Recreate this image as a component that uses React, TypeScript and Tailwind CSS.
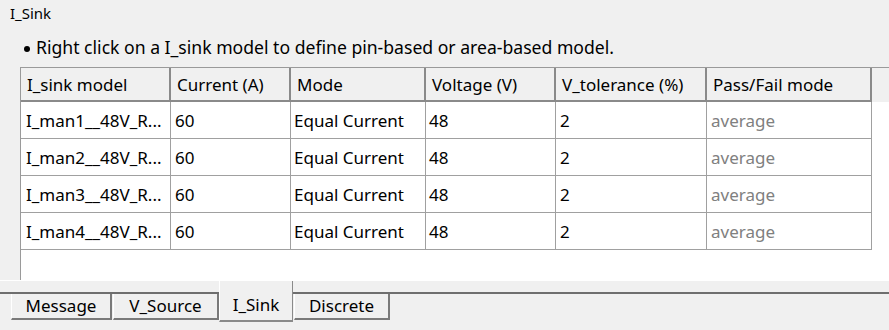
const columns = [
  { label: "I_sink model", w: "w-[150px]" },
  { label: "Current (A)", w: "w-[120px]" },
  { label: "Mode", w: "w-[135px]" },
  { label: "Voltage (V)", w: "w-[130px]" },
  { label: "V_tolerance (%)", w: "w-[151px]" },
  { label: "Pass/Fail mode", w: "w-[165px]" },
];

const rows = [1, 2, 3, 4].map((n) => ({
  model: `I_man${n}__48V_R...`,
  current: "60",
  mode: "Equal Current",
  voltage: "48",
  tolerance: "2",
  passFail: "average",
}));

const tabs = [
  { label: "Message", w: "w-[101px]" },
  { label: "V_Source", w: "w-[106px]" },
  { label: "I_Sink", w: "w-[74px]" },
  { label: "Discrete", w: "w-[96px]" },
];

export default function App() {
  return (
    <div className="w-[889px] h-[330px] overflow-hidden bg-[#f0f0f0] text-[#000] font-['Noto_Sans',sans-serif] flex flex-col">
      <div className="h-[29px] pl-[10px] pt-[3px] text-[15px] leading-[20px]">I_Sink</div>

      <div className="h-[38px] pl-[24px] pt-[6px] flex items-start text-[17.6px] leading-[24px]">
        <span className="w-[6px] h-[6px] rounded-full bg-black mt-[11px] mr-[6px] shrink-0" />
        <span className="whitespace-nowrap">Right click on a I_sink model to define pin-based or area-based model.</span>
      </div>

      <div className="ml-[20px] h-[213px] bg-white border-l border-t border-[#9a9a9a] flex flex-col">
        <div className="flex h-[34px] bg-[#f0f0f0] shrink-0">
          {columns.map((c) => (
            <div
              key={c.label}
              className={`${c.w} shrink-0 border-r-2 border-b-2 border-[#8a8a8a] pl-[6px] pt-[2px] text-[17px] leading-[30px] whitespace-nowrap`}
            >
              {c.label}
            </div>
          ))}
          <div className="flex-1" />
        </div>
        {rows.map((r) => (
          <div key={r.model} className="flex h-[37px] shrink-0 text-[17px] pt-[2px] leading-[34px]">
            <div className="w-[150px] shrink-0 -mt-[2px] pt-[2px] border-r border-b border-[#a0a0a0] pl-[5px] whitespace-nowrap overflow-hidden">
              {r.model}
            </div>
            <div className="w-[120px] shrink-0 -mt-[2px] pt-[2px] border-r border-b border-[#a0a0a0] pl-[4px]">{r.current}</div>
            <div className="w-[135px] shrink-0 -mt-[2px] pt-[2px] border-r border-b border-[#a0a0a0] pl-[3px]">{r.mode}</div>
            <div className="w-[130px] shrink-0 -mt-[2px] pt-[2px] border-r border-b border-[#a0a0a0] pl-[3px]">{r.voltage}</div>
            <div className="w-[151px] shrink-0 -mt-[2px] pt-[2px] border-r border-b border-[#a0a0a0] pl-[4px]">{r.tolerance}</div>
            <div className="w-[165px] shrink-0 -mt-[2px] pt-[2px] border-r border-b border-[#a0a0a0] pl-[4px] text-[#808080]">
              {r.passFail}
            </div>
          </div>
        ))}
      </div>

      <div className="h-[12px] border-t border-white" />

      <div className="relative flex pl-[10px] h-[38px]">
        <div className="absolute left-0 right-0 top-0 border-t-2 border-[#6e6e6e]" />
        {tabs.map((t) =>
          t.label === "I_Sink" ? (
            <div
              key={t.label}
              className={`${t.w} relative z-10 -mt-[11px] h-[41px] bg-[#f0f0f0] border-l border-white border-r border-b-2 border-r-[#8a8a8a] border-b-[#8a8a8a] flex items-end justify-center pb-[2px] text-[17px] leading-[26px]`}
            >
              {t.label}
            </div>
          ) : (
            <div
              key={t.label}
              className={`${t.w} h-[28px] ml-[1px] bg-[#f0f0f0] border-l border-t-2 border-t-[#6e6e6e] border-l-white border-r-2 border-b-2 border-r-[#7a7a7a] border-b-[#7a7a7a] flex items-center justify-center text-[17px] leading-[24px]`}
            >
              {t.label}
            </div>
          )
        )}
      </div>
    </div>
  );
}
